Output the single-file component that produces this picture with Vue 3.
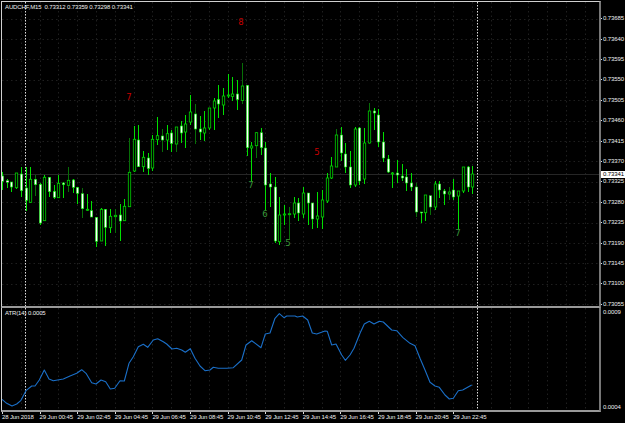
<script setup>
// [white body, body top, body bottom, wick top, wick bottom, dark wick]
const candles = [
  [1,176,181.3,172,190],[1,180.7,182.3,179,188],[1,182,187,182,192],[0,173,187.7,172.7,189],
  [1,174,190.7,166.7,197.3],[1,188,200.3,166.7,211.3],[0,179.3,202.3,166.7,202.7],[1,179.3,184.7,175,196,1],
  [1,184.3,223,182.7,224.7],[0,177.3,220.7,175.3,221.3],[1,177.3,191.7,177.3,196.7],[1,191.3,197.3,185.3,198.7],
  [0,183.3,197.7,175.3,198],[1,183,184.7,181.7,197.7],[0,180.3,185.3,167.3,192,1],[1,180,187.3,178.7,192.7],
  [1,187.3,193.3,187.3,204],[1,193.7,208.7,188.3,217.7,1],[0,209.3,210.3,194,210.7],[1,210.7,217,200.7,217.3],
  [1,217.3,241.3,217.3,247.3],[0,209.3,241,208,241.3],[1,209.3,227.3,209.3,246.3],[0,216.3,227.7,209.3,232.7],
  [0,215.3,216.7,209.3,232.7,1],[1,215,221,204,240.7],[0,206.3,220.7,199.3,221],[0,172.3,206.7,138,206.7,1],
  [0,139.3,171,126,172],[1,140,166.7,125,167],[0,157.3,166.7,151,172],[1,158,168.5,153.3,175],
  [0,139.3,168,135,171],[0,135.7,139.7,117,145],[1,136,140,129,152,1],[0,133.7,140,125,150],
  [1,133,143.5,130,152],[0,127,144,127,152,1],[1,126,133,121,143],[0,124,132,115,148],
  [0,112,122,95,125],[1,114,129,104,144,1],[1,129,132,116,140],[0,128,133,111,141],
  [0,108,128,108,130],[0,101,108,98,130],[1,99.5,104,85,118],[0,96,105,88,115],
  [0,95,96,74,98],[0,94,96.5,77,101],[1,94,99.5,80,110],[0,86,100.5,63,104,1],
  [1,85.3,147.7,85,156],[0,146,148,142,181],[0,132.7,145.7,132,157.7,1],[1,132.7,147.7,128,155],
  [1,148,185,142,210],[1,184,187,173,207],[1,187,241,177,243],[0,215,241.7,197,245],
  [0,214,215,205,225],[0,213.7,214.3,207,240,1],[0,203,214,197,218],[1,203,213,198,221],
  [0,193,214,187,218],[1,193,203,193,225],[1,203,219,203,229],[0,216,219,192,228],
  [0,200,217,190,229],[0,178,201,173,203],[0,166,178,157,179],[0,135,167,129,167,1],
  [1,135,153,127,161],[1,154,167,143,173],[1,167,185,151,188],[0,129,185,127,187],
  [1,128,181,127,185],[0,143,179,128,184],[0,111,143,103,144,1],[1,111,113,108,130],
  [1,115,142,109,147],[1,142,158,132,162],[1,159,172,155,173],[0,173,174,172,188],
  [1,173,175,160,183],[1,176,178,164,181],[1,177,183,169,191],[1,183,187,173,191],
  [1,187,212,183,217,1],[1,212,213,212,223],[0,195,212.7,195,221],[1,195.7,207,196,215,1],
  [0,184,207,181,210],[1,184,190,181,198],[1,191,194,189,205],[0,192,194,187,200,1],
  [1,190,197,179,200],[0,191,196,191,229],[0,167,191,167,193],[1,167,187,166,192],
  [0,174,187,166,194]
].map((c, i) => ({
  x: Math.round(2 + 4.703 * i) + 0.5,
  white: !!c[0],
  top: c[1],
  height: Math.max(c[2] - c[1], 1),
  hi: c[3],
  lo: c[4],
  dark: !!c[5],
}))

const atrPoints = [
  [2,399.3],[6.7,403.3],[12,406],[16.7,404],[20.7,400.7],[26,390.7],[31.7,386],[35,386],[39.3,380],[44.3,370],
  [49,379],[53.3,380.7],[63.3,379],[70,376],[76.7,373.3],[81.7,369.7],[86,373.3],[91.7,382.7],[96,384],[101,380],
  [105.7,381.7],[110.3,389],[114.7,388.3],[120,380.7],[124.3,381],[129,363.3],[133.3,356.7],[138.3,346.7],[143.3,344.3],
  [147.7,347.3],[153.3,340],[157.7,338.7],[163.3,341.7],[166.7,344],[172,349],[176.7,348.3],[181.7,350],[185.3,352.3],
  [190.3,348.7],[195,358.3],[200,366],[205,370.7],[210,370],[213.3,367.3],[218.3,368.3],[226.7,368.3],[233.3,367.7],
  [241.7,360],[246,345],[251.7,340.7],[261,347.7],[265.3,334],[270,333],[275,318.3],[279.3,313.7],[284,317.7],
  [286.7,316],[295,316],[297.3,317],[302.7,316],[307.7,320],[312.3,333],[316.7,334],[325,331],[327.3,331.3],
  [331.7,345],[336,344],[341.7,355],[345.3,360.3],[350,355],[354,348.3],[360,333.3],[364.3,324],[369.3,321.3],
  [374,324],[379.3,321.3],[383.3,322],[391.7,330],[396.7,330.7],[402.7,337.3],[410,343.3],[415,345.7],[420,358.3],
  [425,370],[430,382.3],[435,386],[439.3,387.3],[445,395],[449.3,399],[453.3,398.3],[458.3,390.7],[462.7,390],[471.7,385],
].map((p) => p.join(',')).join(' ')

const prices = ['0.73685','0.73640','0.73595','0.73550','0.73505','0.73460','0.73415','0.73370','0.73325','0.73280','0.73235','0.73190','0.73145','0.73100','0.73055']
const gridY = prices.map((_, i) => Math.round(18.5 + 20.4 * i) + 0.5)
const gridX = Array.from({ length: 31 }, (_, i) => Math.round(20.7 + 18.8 * i) + 0.5)

const times = ['28 Jun 2018','29 Jun 00:45','29 Jun 02:45','29 Jun 04:45','29 Jun 06:45','29 Jun 08:45','29 Jun 10:45','29 Jun 12:45','29 Jun 14:45','29 Jun 16:45','29 Jun 18:45','29 Jun 20:45','29 Jun 22:45']

const counts = [
  { text: '8', x: 241, y: 25, red: true },
  { text: '7', x: 129, y: 100, red: true },
  { text: '5', x: 317, y: 155, red: true },
  { text: '7', x: 251, y: 188, red: false },
  { text: '6', x: 265, y: 217, red: false },
  { text: '5', x: 288, y: 246, red: false },
  { text: '7', x: 458, y: 236, red: false },
]
</script>

<template>
  <div class="terminal">
    <div class="pane main-pane">
      <svg class="chart" viewBox="2 2 597 304">
        <line v-for="y in gridY" :key="'h' + y" class="grid" x1="2" x2="599" :y1="y" :y2="y" />
        <line v-for="x in gridX" :key="'v' + x" class="grid" :x1="x" :x2="x" y1="2" y2="306" />
        <line class="price-line" x1="2" x2="599" y1="174.5" y2="174.5" />
        <line class="period" x1="25.5" x2="25.5" y1="2" y2="306" />
        <line class="period" x1="477.5" x2="477.5" y1="2" y2="306" />
        <g v-for="(c, i) in candles" :key="i">
          <line :class="c.dark ? 'wick dark' : 'wick'" :x1="c.x" :x2="c.x" :y1="c.hi" :y2="c.lo" />
          <rect :class="c.white ? 'body white' : 'body'" :x="c.x - 1.2" :y="c.top" width="2.4" :height="c.height" />
        </g>
        <text v-for="n in counts" :key="n.x" :class="n.red ? 'count red' : 'count'" :x="n.x" :y="n.y">{{ n.text }}</text>
      </svg>
      <div class="pane-title">AUDCHF,M15&nbsp; 0.73312 0.73359 0.73298 0.73341</div>
    </div>
    <div class="scale price-scale">
      <div v-for="p in prices" :key="p" class="scale-row">{{ p }}</div>
      <div class="current-price">0.73341</div>
    </div>
    <div class="pane atr-pane">
      <svg class="chart" viewBox="2 308 597 102">
        <line v-for="x in gridX" :key="'a' + x" class="grid" :x1="x" :x2="x" y1="308" y2="410" />
        <line class="period" x1="25.5" x2="25.5" y1="308" y2="410" />
        <line class="period" x1="477.5" x2="477.5" y1="308" y2="410" />
        <polyline class="atr-line" :points="atrPoints" />
      </svg>
      <div class="pane-title">ATR(14) 0.0005</div>
    </div>
    <div class="scale atr-scale">
      <div class="scale-row">0.0009</div>
      <div class="scale-row">0.0004</div>
    </div>
    <div class="time-axis">
      <div v-for="t in times" :key="t" class="time-label">{{ t }}</div>
    </div>
  </div>
</template>

<style>
html, body {
  margin: 0;
  background: #000;
}
</style>

<style scoped>
.terminal {
  width: 625px;
  height: 423px;
  box-sizing: border-box;
  padding: 1px 0 0 1px;
  background: #000;
  display: grid;
  grid-template-columns: 600px 24px;
  grid-template-rows: 307px 104px 11px;
  font-family: "Liberation Sans", sans-serif;
  color: #eee;
  overflow: hidden;
}

.pane {
  position: relative;
  box-sizing: border-box;
  border-left: 1px solid #d0d0d0;
  border-right: 2px solid #777;
  border-bottom: 2px solid #999;
}

.main-pane {
  border-top: 1px solid #d0d0d0;
}

.chart {
  display: block;
  width: 100%;
  height: 100%;
}

.pane-title {
  position: absolute;
  top: 2px;
  left: 3px;
  font-size: 6px;
  letter-spacing: -0.12px;
  line-height: 7px;
  white-space: nowrap;
}

.grid {
  stroke: #1f1f1f;
  stroke-width: 1;
  stroke-dasharray: 1.5 3;
}

.price-line {
  stroke: #262626;
  stroke-width: 1;
}

.period {
  stroke: #e0e0e0;
  stroke-width: 1;
  stroke-dasharray: 1.5 1.5;
}

.wick {
  stroke: #00e000;
  stroke-width: 1;
  shape-rendering: crispEdges;
}

.wick.dark {
  stroke: #076f07;
}

.body {
  fill: #000;
  stroke: #00d000;
  stroke-width: 0.8;
}

.body.white {
  fill: #fff;
  stroke: #00e000;
  stroke-width: 0.6;
}

.count {
  font-family: "DejaVu Sans", sans-serif;
  font-size: 8.5px;
  text-anchor: middle;
  fill: #3a9a3a;
}

.count.red {
  fill: #c80000;
}

.atr-line {
  fill: none;
  stroke: #1a6fc8;
  stroke-width: 1.1;
  stroke-linejoin: round;
}

.scale {
  position: relative;
  display: flex;
  flex-direction: column;
  font-size: 6px;
  letter-spacing: -0.12px;
}

.price-scale {
  padding-top: 7.3px;
}

.atr-scale {
  justify-content: space-between;
  padding-bottom: 1px;
}

.scale-row {
  position: relative;
  flex: 0 0 auto;
  padding-left: 2px;
  white-space: nowrap;
}

.price-scale .scale-row {
  height: 20.4px;
  line-height: 20.4px;
}

.atr-scale .scale-row {
  height: 8px;
  line-height: 8px;
}

.price-scale .scale-row::before {
  content: "";
  position: absolute;
  left: 0;
  top: 10px;
  width: 1px;
  height: 1px;
  background: #ddd;
}

.current-price {
  position: absolute;
  top: 170px;
  left: 0;
  width: 24px;
  height: 7px;
  line-height: 7px;
  padding-left: 2px;
  box-sizing: border-box;
  background: #fff;
  color: #000;
}

.time-axis {
  grid-column: 1 / 3;
  display: flex;
  padding-left: 1px;
}

.time-label {
  position: relative;
  flex: 0 0 37.6px;
  font-size: 6px;
  letter-spacing: -0.12px;
  line-height: 11px;
  white-space: nowrap;
}

.time-label::before {
  content: "";
  position: absolute;
  left: 0;
  top: 0;
  width: 1px;
  height: 2px;
  background: #ddd;
}
</style>
